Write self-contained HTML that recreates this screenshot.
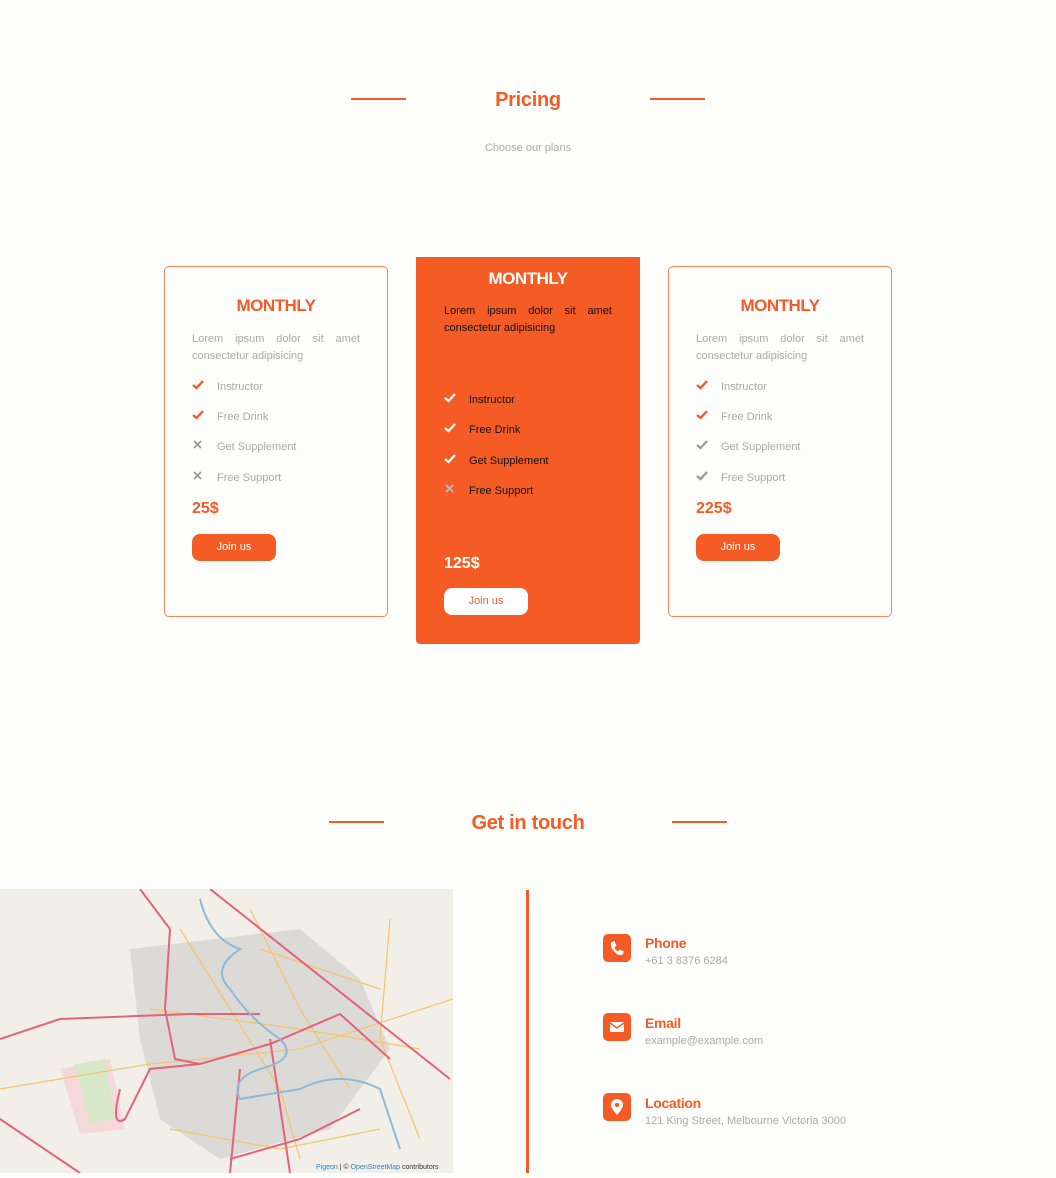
<!DOCTYPE html>
<html><head><meta charset="utf-8"><style>
*{margin:0;padding:0;box-sizing:border-box}
body{width:1056px;height:1178px;background:#fdfdfb;font-family:"Liberation Sans",Arial,sans-serif;position:relative;overflow:hidden}
.a{position:absolute}
.or{color:#f45b25}
.line{position:absolute;height:2px;background:#f45b25;width:55px}
.h{position:absolute;width:100%;text-align:center;font-weight:bold;font-size:20px;color:#f45b25;letter-spacing:-0.3px}
.card{position:absolute;width:224px;border:1.5px solid #f7845a;border-radius:5px;background:#fdfdfb}
.t{position:absolute;width:100%;text-align:center;font-weight:bold;font-size:17px;letter-spacing:-0.5px}
.d{position:absolute;left:27px;width:168px;font-size:11px;line-height:16.5px;text-align:justify;text-align-last:left;color:#aaa}
.f{position:absolute;left:27px;font-size:11px;color:#aaa}
.f svg{display:inline-block;width:25px;height:12px;vertical-align:-1px}
.p{position:absolute;left:27px;font-weight:bold;font-size:16px}
.b{position:absolute;left:27px;width:84px;height:27px;border-radius:8px;font-size:11px;text-align:center;line-height:27px}
.ic{position:absolute;left:603px;width:28px;height:28px;border-radius:5px;background:#f45b25}
.ct{position:absolute;left:645px;font-weight:bold;font-size:14px;color:#f45b25;letter-spacing:-0.3px}
.cs{position:absolute;left:645px;font-size:11px;color:#aaa}
</style></head><body>
<svg width="0" height="0" style="position:absolute"><defs>
<symbol id="ck" viewBox="0 0 25 12"><path d="M1 6 L4.5 9 L11 2" fill="none" stroke="currentColor" stroke-width="2.3"/></symbol>
<symbol id="x" viewBox="0 0 25 12"><path d="M2 2 L9 9 M9 2 L2 9" fill="none" stroke="currentColor" stroke-width="1.8"/></symbol>
</defs></svg>
<div class="line" style="left:351px;top:98px"></div>
<div class="line" style="left:650px;top:98px"></div>
<div class="h" style="top:89px">Pricing</div>
<div class="a" style="width:100%;text-align:center;top:142px;font-size:11px;color:#aaa">Choose our plans</div>

<div class="card" style="left:164px;top:266px;height:351px">
<div class="t or" style="top:29px">MONTHLY</div>
<div class="d" style="top:64px">Lorem ipsum dolor sit amet consectetur adipisicing</div>
<div class="f" style="top:112px"><svg class="or"><use href="#ck"/></svg>Instructor</div>
<div class="f" style="top:142px"><svg class="or"><use href="#ck"/></svg>Free Drink</div>
<div class="f" style="top:172px"><svg style="color:#999"><use href="#x"/></svg>Get Supplement</div>
<div class="f" style="top:203px"><svg style="color:#999"><use href="#x"/></svg>Free Support</div>
<div class="p or" style="top:233px">25$</div>
<div class="b" style="top:267px;background:#f45b25;color:#fff">Join us</div>
</div>

<div class="card" style="left:416px;top:257px;height:387px;background:#f45b25;border:none;border-radius:0 0 4px 4px">
<div class="t" style="top:12px;color:#fff">MONTHLY</div>
<div class="d" style="top:46px;left:28px;color:#111">Lorem ipsum dolor sit amet consectetur adipisicing</div>
<div class="f" style="top:135px;left:28px;color:#111"><svg style="color:#fff"><use href="#ck"/></svg>Instructor</div>
<div class="f" style="top:165px;left:28px;color:#111"><svg style="color:#fff"><use href="#ck"/></svg>Free Drink</div>
<div class="f" style="top:196px;left:28px;color:#111"><svg style="color:#fff"><use href="#ck"/></svg>Get Supplement</div>
<div class="f" style="top:226px;left:28px;color:#111"><svg style="color:#bbb"><use href="#x"/></svg>Free Support</div>
<div class="p" style="top:298px;left:28px;color:#fff">125$</div>
<div class="b" style="top:331px;left:28px;background:#fff;color:#f45b25">Join us</div>
</div>

<div class="card" style="left:668px;top:266px;height:351px">
<div class="t or" style="top:29px">MONTHLY</div>
<div class="d" style="top:64px">Lorem ipsum dolor sit amet consectetur adipisicing</div>
<div class="f" style="top:112px"><svg class="or"><use href="#ck"/></svg>Instructor</div>
<div class="f" style="top:142px"><svg class="or"><use href="#ck"/></svg>Free Drink</div>
<div class="f" style="top:172px"><svg style="color:#999"><use href="#ck"/></svg>Get Supplement</div>
<div class="f" style="top:203px"><svg style="color:#999"><use href="#ck"/></svg>Free Support</div>
<div class="p or" style="top:233px">225$</div>
<div class="b" style="top:267px;background:#f45b25;color:#fff">Join us</div>
</div>

<div class="line" style="left:329px;top:821px"></div>
<div class="line" style="left:672px;top:821px"></div>
<div class="h" style="top:812px">Get in touch</div>

<svg class="a" style="left:0;top:889px" width="453" height="284" viewBox="0 0 453 284">
<rect width="453" height="284" fill="#f2efe9"/>
<path d="M130 60 L300 40 L360 90 L390 160 L330 240 L220 270 L160 230 L140 150 Z" fill="#dcdad6"/>
<path d="M60 180 L110 170 L125 240 L80 245 Z" fill="#f3d9d9"/>
<path d="M75 175 L105 170 L115 230 L90 235 Z" fill="#d6e8c8"/>
<g fill="none" stroke="#f5c46a" stroke-width="1.2">
<path d="M0 200 L150 175 L300 160 L453 110"/><path d="M180 40 L230 120 L280 200 L300 270"/>
<path d="M250 20 L300 120 L350 200"/><path d="M150 120 L300 140 L420 160"/>
<path d="M260 60 L380 100"/><path d="M170 240 L280 260 L380 240"/>
<path d="M390 30 L380 150 L420 250"/>
</g>
<g fill="none" stroke="#e2637a" stroke-width="2">
<path d="M0 150 L60 130 L190 125 L260 125"/><path d="M210 0 L450 190"/>
<path d="M170 40 L165 120 L175 170 L200 175 L270 155 L340 125 L390 170"/>
<path d="M140 0 L170 40"/><path d="M120 200 Q110 240 125 230 L150 180 L200 175"/>
<path d="M230 270 L300 250 L360 220"/><path d="M0 230 L80 284"/>
<path d="M240 180 L230 284"/><path d="M270 150 L290 284"/>
</g>
<path d="M200 10 Q210 50 240 60 Q210 80 230 100 Q250 130 280 150 Q300 170 260 180 Q230 190 240 210 L300 200 Q340 180 380 200 L400 260" fill="none" stroke="#8fb8d6" stroke-width="2"/>
<text x="316" y="280" font-size="7" fill="#333" font-family="Liberation Sans"><tspan fill="#2a86c6">Pigeon</tspan> | © <tspan fill="#2a86c6">OpenStreetMap</tspan> contributors</text>
</svg>

<div class="a" style="left:526px;top:890px;width:3px;height:283px;background:#f45b25"></div>

<div class="ic" style="top:934px"><svg width="28" height="28" viewBox="0 0 28 28"><path d="M8 8.5 L11.5 7 L13.5 11.5 L11.5 13.5 Q13 16.5 15 17.5 L16.8 15.5 L21 17.5 L19.5 21 Q15 22 11 17.5 Q7 13 8 8.5Z" fill="#fff"/></svg></div>
<div class="ct" style="top:935px">Phone</div>
<div class="cs" style="top:955px">+61 3 8376 6284</div>
<div class="ic" style="top:1013px"><svg width="28" height="28" viewBox="0 0 28 28"><rect x="7" y="9" width="14" height="10" rx="1" fill="#fff"/><path d="M7 10 L14 15 L21 10" fill="none" stroke="#f45b25" stroke-width="1.5"/></svg></div>
<div class="ct" style="top:1015px">Email</div>
<div class="cs" style="top:1035px">example@example.com</div>
<div class="ic" style="top:1093px"><svg width="28" height="28" viewBox="0 0 28 28"><path d="M14 22 Q8 15 8 12 A6 6 0 0 1 20 12 Q20 15 14 22Z" fill="#fff"/><circle cx="14" cy="12" r="2.2" fill="#f45b25"/></svg></div>
<div class="ct" style="top:1095px">Location</div>
<div class="cs" style="top:1115px">121 King Street, Melbourne Victoria 3000</div>
</body></html>
